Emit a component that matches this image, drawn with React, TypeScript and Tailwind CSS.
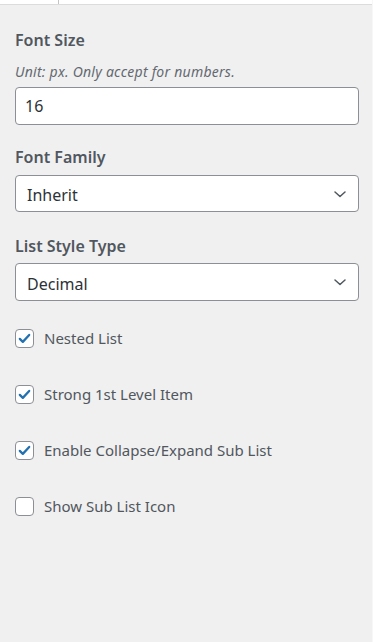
import React from "react";

const Chevron = () => (
  <svg width="16" height="16" viewBox="0 0 16 16" fill="none" className="shrink-0">
    <path d="M3 6l5 4.5L13 6" stroke="#50575e" strokeWidth="1.5" strokeLinecap="round" strokeLinejoin="round" />
  </svg>
);

const Check = ({ checked, label }: { checked: boolean; label: string }) => (
  <div className="flex items-center h-[20px]">
    <span className="w-[19px] h-[19px] rounded-[4px] border border-[#8c8f94] bg-white flex items-center justify-center shrink-0">
      {checked && (
        <svg width="15" height="15" viewBox="0 0 16 16" fill="none">
          <path d="M3 8.4l3.2 3.2L13 4.2" stroke="#2271b1" strokeWidth="2.4" strokeLinecap="round" strokeLinejoin="round" />
        </svg>
      )}
    </span>
    <span className="ml-[10px] text-[15px] text-[#50575e] leading-none">{label}</span>
  </div>
);

export default function App() {
  return (
    <div
      className="w-[373px] h-[642px] bg-[#f0f0f0] overflow-hidden flex flex-col border-r border-[#f7f7f7]"
      style={{ fontFamily: '"Segoe UI", "Noto Sans", "Open Sans", sans-serif' }}
    >
      <div className="h-[5px] bg-white border-b border-[#dcdcde] flex shrink-0">
        <div className="w-[59px] border-r border-[#c3c4c7]" />
      </div>
      <div className="px-[15px] pt-[25px] flex flex-col">
        <div className="text-[16px] font-semibold text-[#50575e] leading-[20px]">Font Size</div>
        <div className="mt-[12px] text-[14px] tracking-[0.25px] italic text-[#646970] leading-[20px]">Unit: px. Only accept for numbers.</div>
        <div className="mt-[5px] h-[38px] w-[344px] rounded-[4px] border border-[#8c8f94] bg-white flex items-center px-[9px] text-[16px] text-[#2c3338]">
          16
        </div>
        <div className="mt-[22px] text-[16px] font-semibold text-[#50575e] leading-[20px]">Font Family</div>
        <div className="mt-[8px] h-[37px] w-[344px] rounded-[4px] border border-[#8c8f94] bg-white flex items-center justify-between pl-[11px] pr-[10px] text-[16px] text-[#2c3338]">
          <span className="pt-[3px]">Inherit</span>
          <Chevron />
        </div>
        <div className="mt-[24px] text-[16px] font-semibold text-[#50575e] leading-[20px]">List Style Type</div>
        <div className="mt-[7px] h-[38px] w-[344px] rounded-[4px] border border-[#8c8f94] bg-white flex items-center justify-between pl-[11px] pr-[10px] text-[16px] text-[#2c3338]">
          <span className="pt-[3px]">Decimal</span>
          <Chevron />
        </div>
        <div className="mt-[27px] flex flex-col gap-[36px]">
          <Check checked label="Nested List" />
          <Check checked label="Strong 1st Level Item" />
          <Check checked label="Enable Collapse/Expand Sub List" />
          <Check checked={false} label="Show Sub List Icon" />
        </div>
      </div>
    </div>
  );
}
